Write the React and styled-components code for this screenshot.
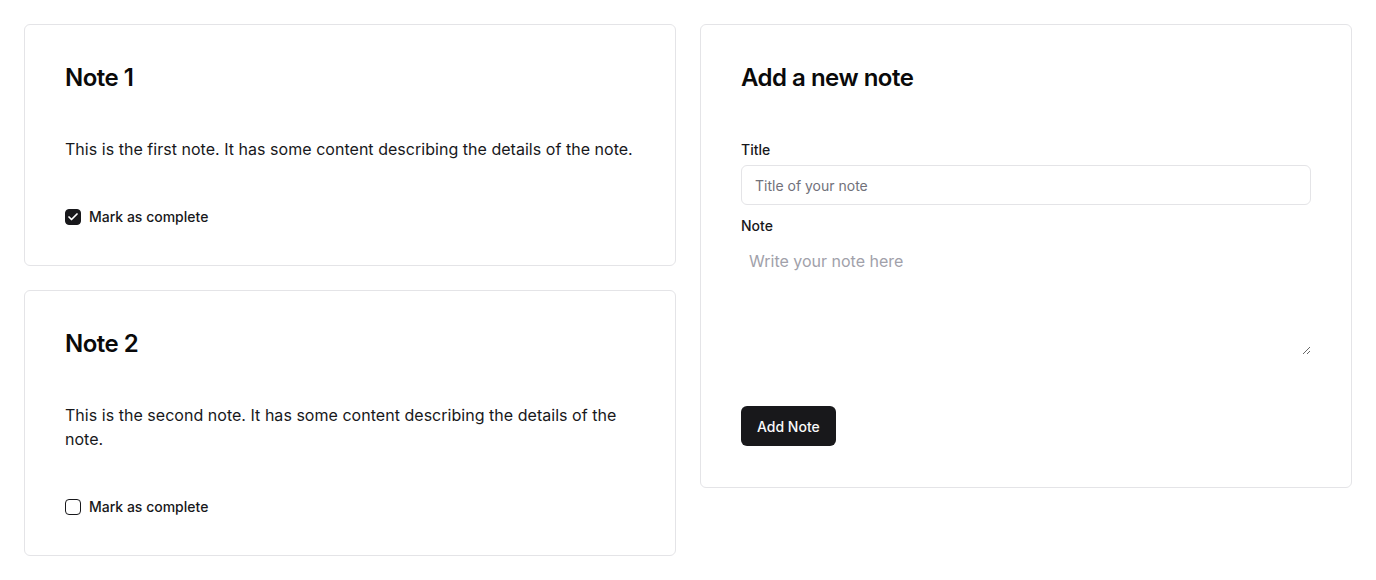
import React, { useState } from "react";
import styled, { createGlobalStyle } from "styled-components";

const GlobalStyle = createGlobalStyle`
  * { box-sizing: border-box; }
  body {
    margin: 0;
    background: #ffffff;
    font-family: Inter, "Noto Sans", sans-serif;
    color: #0a0a0a;
  }
`;

const notesData = [
  {
    id: 1,
    title: "Note 1",
    body: "This is the first note. It has some content describing the details of the note.",
    done: true,
  },
  {
    id: 2,
    title: "Note 2",
    body: "This is the second note. It has some content describing the details of the note.",
    done: false,
  },
];

const Page = styled.main`
  display: grid;
  grid-template-columns: 1fr 1fr;
  gap: 24px;
  padding: 24px;
  align-items: start;
`;

const Column = styled.div`
  display: flex;
  flex-direction: column;
  gap: 24px;
`;

const Card = styled.section`
  border: 1px solid #e4e4e7;
  border-radius: 6px;
  background: #fff;
  padding: 41px 40px ${({ $bottom }) => $bottom || 40}px;
`;

const Title = styled.h2`
  margin: 0;
  font-size: 24px;
  line-height: 24px;
  font-weight: 600;
  letter-spacing: -0.5px;
`;

const Body = styled.p`
  margin: 47px 0 0;
  font-size: 16px;
  line-height: 24px;
  letter-spacing: 0.03px;
  color: #18181b;
`;

const CheckRow = styled.label`
  display: flex;
  align-items: center;
  gap: 8px;
  margin-top: 48px;
  font-size: 14px;
  font-weight: 500;
  line-height: 16px;
  color: #18181b;
  cursor: pointer;
`;

const Box = styled.span`
  width: 16px;
  height: 16px;
  border-radius: 4px;
  border: 1.5px solid #18181b;
  background: ${({ $checked }) => ($checked ? "#18181b" : "#fff")};
  display: flex;
  align-items: center;
  justify-content: center;
  flex-shrink: 0;
`;

const Form = styled.form`
  display: flex;
  flex-direction: column;
  margin-top: 50px;
`;

const Label = styled.label`
  font-size: 14px;
  font-weight: 500;
  line-height: 20px;
  color: #18181b;
  margin-bottom: 5px;
`;

const Input = styled.input`
  height: 40px;
  width: 100%;
  border: 1px solid #e4e4e7;
  border-radius: 6px;
  padding: 0 13px;
  font: inherit;
  font-size: 14px;
  color: #0a0a0a;
  outline: none;
  margin-bottom: 11px;
  &::placeholder { color: #71717a; }
`;

const TextArea = styled.textarea`
  width: 100%;
  height: 114px;
  border: none;
  padding: 8px;
  font: inherit;
  font-size: 16px;
  line-height: 24px;
  color: #0a0a0a;
  outline: none;
  resize: vertical;
  &::placeholder { color: #a1a1aa; }
`;

const Button = styled.button`
  align-self: flex-start;
  margin-top: 51px;
  height: 40px;
  padding: 0 16px;
  border: none;
  border-radius: 6px;
  background: #18181b;
  color: #fafafa;
  font: inherit;
  font-size: 14px;
  font-weight: 500;
  cursor: pointer;
`;

const Check = () => (
  <svg width="12" height="12" viewBox="0 0 24 24" fill="none" stroke="#fff" strokeWidth="3.5" strokeLinecap="round" strokeLinejoin="round">
    <path d="M20 6 9 17l-5-5" />
  </svg>
);

const NoteCard = ({ note, onToggle }) => (
  <Card>
    <Title>{note.title}</Title>
    <Body>{note.body}</Body>
    <CheckRow onClick={onToggle}>
      <Box $checked={note.done}>{note.done && <Check />}</Box>
      Mark as complete
    </CheckRow>
  </Card>
);

export default function App() {
  const [notes, setNotes] = useState(notesData);
  const toggle = (id) =>
    setNotes((ns) => ns.map((n) => (n.id === id ? { ...n, done: !n.done } : n)));

  return (
    <>
      <GlobalStyle />
      <Page>
        <Column>
          {notes.map((n) => (
            <NoteCard key={n.id} note={n} onToggle={() => toggle(n.id)} />
          ))}
        </Column>
        <Card $bottom={41}>
          <Title>Add a new note</Title>
          <Form onSubmit={(e) => e.preventDefault()}>
            <Label htmlFor="title">Title</Label>
            <Input id="title" placeholder="Title of your note" />
            <Label htmlFor="note">Note</Label>
            <TextArea id="note" placeholder="Write your note here" />
            <Button type="submit">Add Note</Button>
          </Form>
        </Card>
      </Page>
    </>
  );
}
